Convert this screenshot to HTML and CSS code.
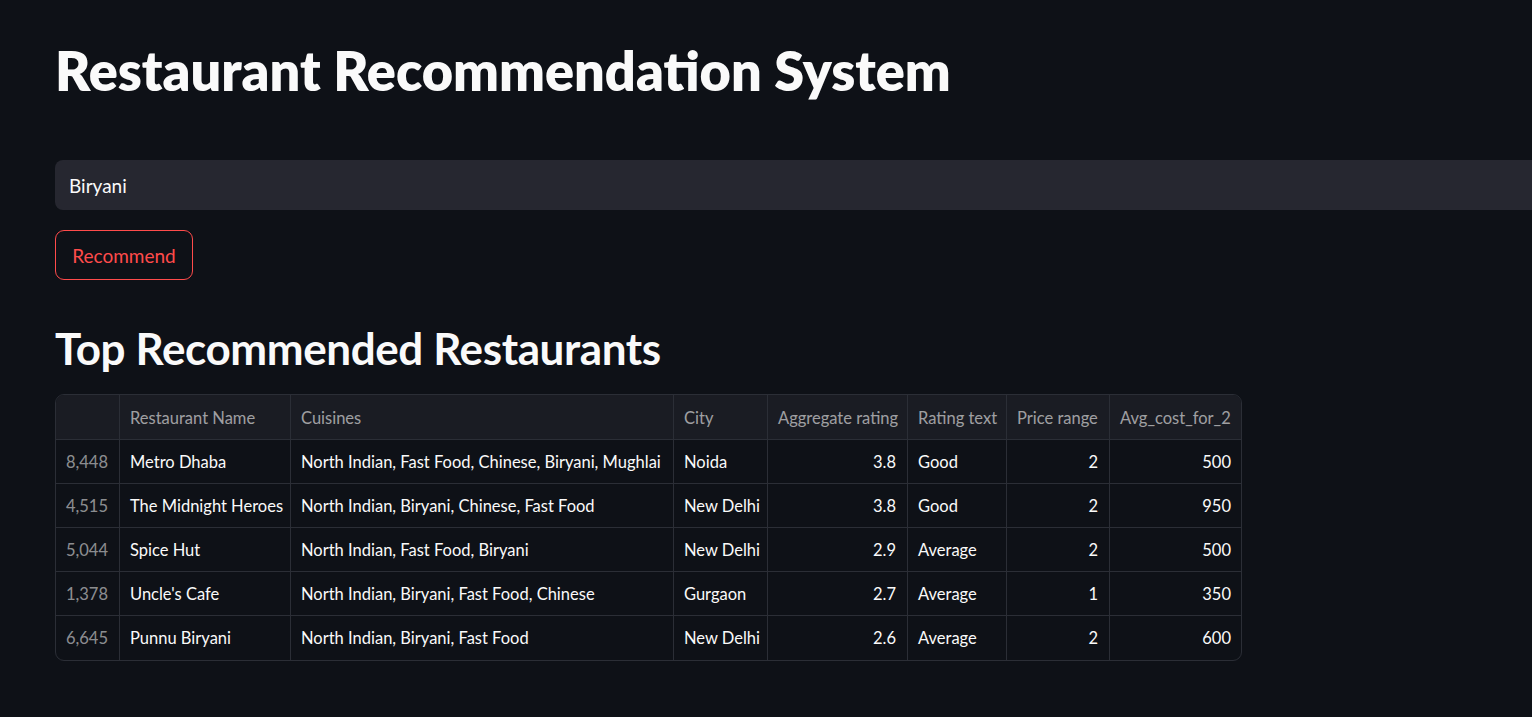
FILE: index.html
```html
<!DOCTYPE html>
<html lang="en">
<head>
<meta charset="utf-8">
<title>Restaurant Recommendation System</title>
<link rel="stylesheet" href="styles.css">
</head>
<body>
<main class="app">
  <h1 class="title">Restaurant Recommendation System</h1>
  <div class="input-box"><span class="input-text">Biryani</span></div>
  <button class="btn">Recommend</button>
  <h2 class="subtitle">Top Recommended Restaurants</h2>
  <div class="grid">
    <div class="cell head idx"></div>
    <div class="cell head">Restaurant Name</div>
    <div class="cell head">Cuisines</div>
    <div class="cell head">City</div>
    <div class="cell head">Aggregate rating</div>
    <div class="cell head">Rating text</div>
    <div class="cell head">Price range</div>
    <div class="cell head last">Avg_cost_for_2</div>

    <div class="cell idx">8,448</div>
    <div class="cell">Metro Dhaba</div>
    <div class="cell">North Indian, Fast Food, Chinese, Biryani, Mughlai</div>
    <div class="cell">Noida</div>
    <div class="cell num">3.8</div>
    <div class="cell">Good</div>
    <div class="cell num">2</div>
    <div class="cell num last">500</div>

    <div class="cell idx">4,515</div>
    <div class="cell">The Midnight Heroes</div>
    <div class="cell">North Indian, Biryani, Chinese, Fast Food</div>
    <div class="cell">New Delhi</div>
    <div class="cell num">3.8</div>
    <div class="cell">Good</div>
    <div class="cell num">2</div>
    <div class="cell num last">950</div>

    <div class="cell idx">5,044</div>
    <div class="cell">Spice Hut</div>
    <div class="cell">North Indian, Fast Food, Biryani</div>
    <div class="cell">New Delhi</div>
    <div class="cell num">2.9</div>
    <div class="cell">Average</div>
    <div class="cell num">2</div>
    <div class="cell num last">500</div>

    <div class="cell idx">1,378</div>
    <div class="cell">Uncle's Cafe</div>
    <div class="cell">North Indian, Biryani, Fast Food, Chinese</div>
    <div class="cell">Gurgaon</div>
    <div class="cell num">2.7</div>
    <div class="cell">Average</div>
    <div class="cell num">1</div>
    <div class="cell num last">350</div>

    <div class="cell idx bottom">6,645</div>
    <div class="cell bottom">Punnu Biryani</div>
    <div class="cell bottom">North Indian, Biryani, Fast Food</div>
    <div class="cell bottom">New Delhi</div>
    <div class="cell num bottom">2.6</div>
    <div class="cell bottom">Average</div>
    <div class="cell num bottom">2</div>
    <div class="cell num last bottom">600</div>
  </div>
</main>
</body>
</html>
```

FILE: styles.css
```css
* { box-sizing: border-box; }
html, body {
  margin: 0;
  padding: 0;
  background: #0e1117;
  color: #fafafa;
  font-family: "Lato", "Noto Sans", sans-serif;
  overflow: hidden;
  height: 717px;
}
.app {
  padding: 35px 0 0 55px;
  display: flex;
  flex-direction: column;
  align-items: flex-start;
}
.title {
  margin: 0;
  font-size: 54px;
  font-weight: 800;
  line-height: 72px;
  letter-spacing: 0;
  color: #fafafa;
}
.input-box {
  margin-top: 53px;
  width: calc(100% + 40px);
  height: 50px;
  background: #262730;
  border-radius: 8px;
  display: flex;
  align-items: center;
  padding-left: 14px;
}
.input-text {
  font-size: 19px;
  color: #fafafa;
}
.btn {
  margin-top: 20px;
  height: 50px;
  width: 138px;
  border: 1px solid #ff4b4b;
  border-radius: 9px;
  background: transparent;
  color: #ff4b4b;
  font-family: inherit;
  font-size: 19px;
  padding: 0;
}
.subtitle {
  margin: 40px 0 0 0;
  font-size: 44px;
  font-weight: 700;
  line-height: 56px;
  letter-spacing: -0.4px;
  color: #fafafa;
}
.grid {
  margin-top: 18px;
  display: grid;
  grid-template-columns: 64px 171px 383px 94px 140px 99px 103px 133px;
  grid-template-rows: 45px repeat(5, 44px);
  border: 1px solid #2b2e36;
  border-radius: 9px;
  overflow: hidden;
  width: 1187px;
}
.cell {
  display: flex;
  align-items: center;
  padding: 0 11px 0 10px;
  font-size: 16.5px;
  color: #fafafa;
  border-right: 1px solid #2b2e36;
  border-bottom: 1px solid #2b2e36;
  white-space: nowrap;
  overflow: hidden;
}
.cell.last { border-right: none; }
.cell.num.last { padding-right: 12px; }
.cell.bottom { border-bottom: none; }
.head {
  background: #1a1c23;
  color: rgba(250, 250, 250, 0.6);
  padding-top: 1px;
}
.idx {
  justify-content: flex-end;
  color: rgba(250, 250, 250, 0.55);
}
.num { justify-content: flex-end; }
```
